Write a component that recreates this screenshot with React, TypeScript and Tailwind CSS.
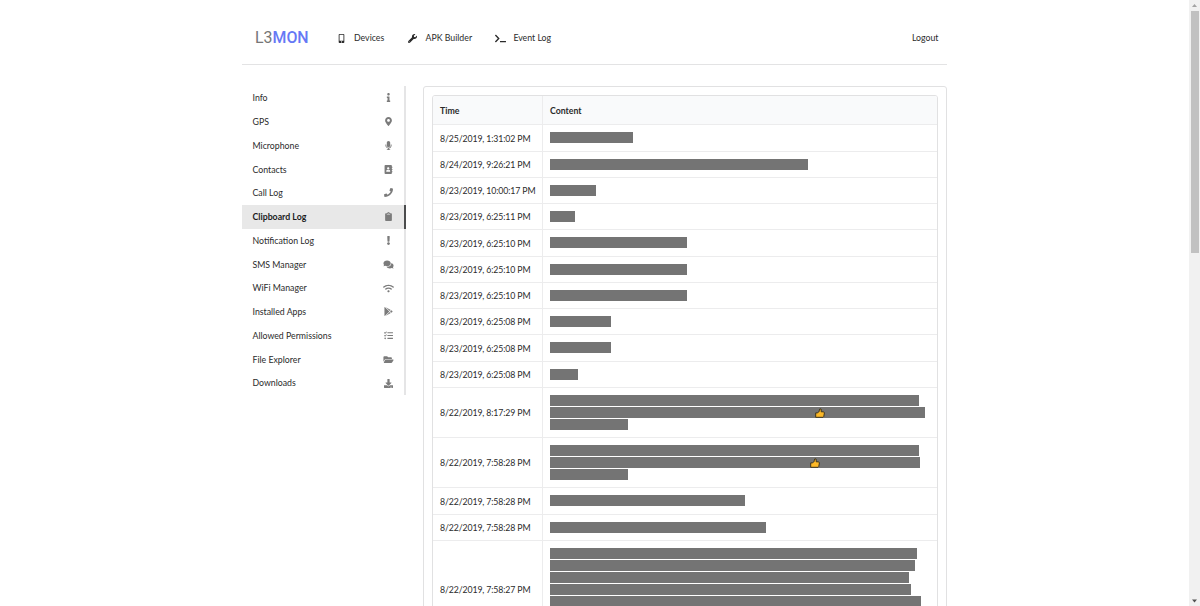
import { IconType } from 'react-icons'
import {
  FaAddressBook,
  FaClipboard,
  FaComments,
  FaDownload,
  FaExclamation,
  FaFolderOpen,
  FaGooglePlay,
  FaInfo,
  FaMapMarkerAlt,
  FaMicrophone,
  FaMobileAlt,
  FaPhone,
  FaTasks,
  FaTerminal,
  FaWifi,
  FaWrench,
} from 'react-icons/fa'

interface MenuEntry {
  label: string
  icon: IconType
}

interface Line {
  width: number
  thumb?: number
}

interface LogEntry {
  time: string
  lines: Line[]
}

const sideMenu: MenuEntry[] = [
  { label: 'Info', icon: FaInfo },
  { label: 'GPS', icon: FaMapMarkerAlt },
  { label: 'Microphone', icon: FaMicrophone },
  { label: 'Contacts', icon: FaAddressBook },
  { label: 'Call Log', icon: FaPhone },
  { label: 'Clipboard Log', icon: FaClipboard },
  { label: 'Notification Log', icon: FaExclamation },
  { label: 'SMS Manager', icon: FaComments },
  { label: 'WiFi Manager', icon: FaWifi },
  { label: 'Installed Apps', icon: FaGooglePlay },
  { label: 'Allowed Permissions', icon: FaTasks },
  { label: 'File Explorer', icon: FaFolderOpen },
  { label: 'Downloads', icon: FaDownload },
]

const logs: LogEntry[] = [
  { time: '8/25/2019, 1:31:02 PM', lines: [{ width: 83 }] },
  { time: '8/24/2019, 9:26:21 PM', lines: [{ width: 257.5 }] },
  { time: '8/23/2019, 10:00:17 PM', lines: [{ width: 46 }] },
  { time: '8/23/2019, 6:25:11 PM', lines: [{ width: 25 }] },
  { time: '8/23/2019, 6:25:10 PM', lines: [{ width: 137 }] },
  { time: '8/23/2019, 6:25:10 PM', lines: [{ width: 137 }] },
  { time: '8/23/2019, 6:25:10 PM', lines: [{ width: 137 }] },
  { time: '8/23/2019, 6:25:08 PM', lines: [{ width: 61 }] },
  { time: '8/23/2019, 6:25:08 PM', lines: [{ width: 61 }] },
  { time: '8/23/2019, 6:25:08 PM', lines: [{ width: 28 }] },
  { time: '8/22/2019, 8:17:29 PM', lines: [{ width: 369 }, { width: 375, thumb: 265 }, { width: 78 }] },
  { time: '8/22/2019, 7:58:28 PM', lines: [{ width: 369 }, { width: 370, thumb: 260 }, { width: 78 }] },
  { time: '8/22/2019, 7:58:28 PM', lines: [{ width: 195 }] },
  { time: '8/22/2019, 7:58:28 PM', lines: [{ width: 216 }] },
  {
    time: '8/22/2019, 7:58:27 PM',
    lines: [
      { width: 367 },
      { width: 365 },
      { width: 359 },
      { width: 361 },
      { width: 371 },
      { width: 366 },
      { width: 120 },
    ],
  },
]

function ThumbIcon({ left }: { left: number }) {
  return (
    <svg className="absolute top-px h-[10px] w-[10px]" style={{ left }} viewBox="0 0 10 10">
      <path
        d="M4.3 2.2 4.9.8 6.2 1.2V3.8H8.6L9.4 4.9 8.8 8.4 8 9.3H.7V4.9H2.3L4.3 3.4Z"
        fill="#fcb827"
        stroke="#3d3520"
        strokeWidth="1"
        strokeLinejoin="round"
      />
    </svg>
  )
}

function TopItem({ label, icon: Icon }: MenuEntry) {
  return (
    <a className="flex items-center">
      <Icon className="mr-[7.5px] ml-[0.5px] h-[9px] w-[11px]" />
      <span>{label}</span>
    </a>
  )
}

function SideItem({ label, icon: Icon }: MenuEntry) {
  const active = label === 'Clipboard Log'
  return (
    <a
      className={`flex h-[23.77px] items-center justify-between border-r-2 pt-[0.8px] pr-[10px] pl-[10.5px] ${
        active ? 'border-[#4b4c4d] bg-[#e8e8e8] font-bold text-[#1b1c1d]' : 'border-[#e5e5e6]'
      }`}
    >
      <span>{label}</span>
      <Icon className="mb-[0.8px] h-[9px] w-[11px] text-[#7b7b7b]" />
    </a>
  )
}

function LogRow({ time, lines }: LogEntry) {
  return (
    <div className="flex border-t border-[#ececed]">
      <div className="flex w-[110px] shrink-0 items-center border-r border-[#ececed] pt-px pl-[7px] tracking-[-0.12px] whitespace-nowrap">
        {time}
      </div>
      <div className="flex flex-col gap-px pt-[7px] pb-[7.25px] pl-[7px]">
        {lines.map((line, i) => (
          <div key={i} className="relative h-[11px] bg-[#747474]" style={{ width: line.width }}>
            {line.thumb && <ThumbIcon left={line.thumb} />}
          </div>
        ))}
      </div>
    </div>
  )
}

function Scrollbar() {
  return (
    <div className="flex w-[11px] shrink-0 flex-col items-center bg-[#f1f1f1]">
      <svg className="h-[11px] w-[11px] shrink-0" viewBox="0 0 11 11">
        <path d="M3 7 5.5 4 8 7Z" fill="#a3a3a3" />
      </svg>
      <div className="h-[242px] w-[8px] bg-[#c1c1c1]" />
      <svg className="mt-auto h-[11px] w-[11px] shrink-0" viewBox="0 0 11 11">
        <path d="M3 4.5h5L5.5 7.5Z" fill="#505050" />
      </svg>
    </div>
  )
}

export default function App() {
  return (
    <div className="flex h-[606px] overflow-hidden bg-white font-['Lato',sans-serif] text-[8.75px] leading-[12px] text-[#2b2b2b]">
      <div className="flex-1 overflow-hidden">
        <div className="ml-[242px] w-[705px]">
          <header className="flex h-[65px] items-center border-b border-[#e3e3e4] pt-[12px] pr-[8.5px] pl-[13px]">
            <h1 className="w-[80px] font-['Roboto',sans-serif] text-[15.9px] leading-none text-[#767676]">
              L3<span className="font-medium text-[#6678f5]">MON</span>
            </h1>
            <nav className="flex gap-[22.3px]">
              <TopItem label="Devices" icon={FaMobileAlt} />
              <TopItem label="APK Builder" icon={FaWrench} />
              <TopItem label="Event Log" icon={FaTerminal} />
            </nav>
            <a className="ml-auto">Logout</a>
          </header>

          <div className="mt-[21px] flex items-start">
            <aside className="w-[164px]">
              {sideMenu.map((item) => (
                <SideItem key={item.label} {...item} />
              ))}
            </aside>

            <main className="ml-[16.5px] w-[524.5px] rounded-[3px] border border-[#e1e1e2] pt-[8.4px] pr-[8px] pb-3 pl-[8.5px]">
              <div className="overflow-hidden rounded-[3px] border border-[#e1e1e2]">
                <div className="flex h-[28px] bg-[#f9fafb] font-bold">
                  <div className="flex w-[110px] items-center border-r border-[#ececed] pt-px pl-[7px]">Time</div>
                  <div className="flex items-center pt-px pl-[7px]">Content</div>
                </div>
                {logs.map((log, i) => (
                  <LogRow key={i} {...log} />
                ))}
              </div>
            </main>
          </div>
        </div>
      </div>
      <Scrollbar />
    </div>
  )
}
